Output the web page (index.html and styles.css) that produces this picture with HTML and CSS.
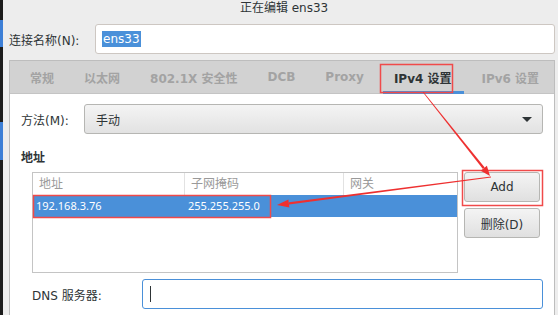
FILE: index.html
```html
<!DOCTYPE html>
<html lang="zh-CN">
<head>
<meta charset="utf-8">
<title>正在编辑 ens33</title>
<link rel="stylesheet" href="styles.css">
</head>
<body>
<div class="screen">
  <div class="strip"></div>
  <div class="window">
    <div class="title">正在编辑 ens33</div>
    <div class="name-row">
      <span class="name-label">连接名称(N):</span>
      <div class="entry"><span class="sel">ens33</span></div>
    </div>
    <div class="notebook">
      <div class="tabs">
        <span class="tab">常规</span>
        <span class="tab">以太网</span>
        <span class="tab">802.1X 安全性</span>
        <span class="tab">DCB</span>
        <span class="tab">Proxy</span>
        <span class="tab active">IPv4 设置</span>
        <span class="tab">IPv6 设置</span>
      </div>
      <div class="page">
        <div class="method-row">
          <span class="method-label">方法(M):</span>
          <div class="combo"><span>手动</span><span class="caret"></span></div>
        </div>
        <div class="heading">地址</div>
        <div class="addr-row">
          <div class="table">
            <div class="thead">
              <div class="th">地址</div>
              <div class="th">子网掩码</div>
              <div class="th">网关</div>
            </div>
            <div class="trow">
              <div class="td">192.168.3.76</div>
              <div class="td">255.255.255.0</div>
              <div class="td"></div>
            </div>
          </div>
          <div class="btns">
            <div class="btn">Add</div>
            <div class="btn">删除(D)</div>
          </div>
        </div>
        <div class="dns-row">
          <span class="dns-label">DNS 服务器:</span>
          <div class="entry focus"><span class="cursor"></span></div>
        </div>
      </div>
    </div>
  </div>
  <svg class="annot" width="558" height="315" viewBox="0 0 558 315">
    <g fill="none" stroke="#f04a4a" stroke-width="1.5">
      <rect x="380.5" y="64.5" width="72" height="28"/>
      <rect x="462.5" y="170.5" width="80" height="35"/>
      <rect x="33.5" y="195.5" width="237" height="22"/>
    </g>
    <g fill="#ee3030">
      <polygon points="422.8,92.2 423.3,91.8 484.7,167.5 482.9,169"/>
      <polygon points="480.7,170.7 486.9,165.7 490,176"/>
      <polygon points="491,176.6 491,177.4 289,204.6 289,202.2"/>
      <polygon points="288.4,199.5 289.4,207.6 277,205"/>
    </g>
  </svg>
</div>
</body>
</html>
```

FILE: styles.css
```css
* { box-sizing: border-box; }
html, body { margin: 0; padding: 0; }
body {
  width: 558px;
  height: 315px;
  overflow: hidden;
  font-family: "DejaVu Sans", "Noto Sans CJK SC", sans-serif;
  font-size: 12px;
  color: #2e3436;
  background: #ededed;
}
.screen {
  position: relative;
  display: flex;
  width: 558px;
  height: 315px;
}
.strip {
  width: 3px;
  flex: none;
  background: linear-gradient(to bottom, #1c1c1c 0 20px, #3d7fd6 20px 47px, #1c1c1c 47px 122px, #3d7fd6 122px 160px, #1c1c1c 160px);
}
.window {
  flex: 1;
  display: flex;
  flex-direction: column;
  padding: 0 6px 0 6px;
  background: #ededed;
}
.title {
  height: 16px;
  line-height: 16px;
  text-align: center;
  padding-left: 4px;
  color: #2e3436;
}
.name-row {
  display: flex;
  align-items: center;
  margin-top: 8px;
  height: 30px;
}
.name-label { width: 86px; flex: none; }
.entry {
  flex: 1;
  height: 30px;
  background: #fff;
  border: 1px solid #cdc7c2;
  border-radius: 3px;
  display: flex;
  align-items: center;
  padding-left: 6px;
}
.sel {
  background: #4a90d9;
  color: #fff;
  line-height: 16px;
  padding: 0 1px;
}
.notebook {
  margin-top: 6px;
  flex: 1;
  display: flex;
  flex-direction: column;
  border: 1px solid #bdbdbd;
  border-bottom: none;
}
.tabs {
  height: 33px;
  flex: none;
  background: #d2d2d2;
  display: flex;
  align-items: stretch;
  padding-left: 5px;
  border-bottom: 1px solid #c4c4c4;
}
.tab {
  position: relative;
  display: flex;
  align-items: center;
  padding: 0 15px;
  font-weight: bold;
  color: #a3a3a3;
  white-space: nowrap;
}
.tab.active { color: #2e3436; }
.tab.active::after {
  content: "";
  position: absolute;
  left: 4px;
  right: 3px;
  bottom: -1px;
  height: 3px;
  background: #4a90d9;
}
.page {
  flex: 1;
  background: #ffffff;
  padding: 10px 11px 0 11px;
  display: flex;
  flex-direction: column;
}
.method-row {
  display: flex;
  align-items: center;
  height: 30px;
}
.method-label { width: 63px; flex: none; }
.combo {
  flex: 1;
  height: 30px;
  display: flex;
  align-items: center;
  justify-content: space-between;
  padding: 0 10px 0 11px;
  border: 1px solid #b6b6b3;
  border-radius: 3px;
  background: linear-gradient(to bottom, #f4f4f4, #e2e2e2);
}
.caret {
  width: 0;
  height: 0;
  border-left: 5px solid transparent;
  border-right: 5px solid transparent;
  border-top: 5px solid #2e3436;
}
.heading {
  margin-top: 16px;
  line-height: 16px;
  font-weight: bold;
}
.addr-row {
  display: flex;
  gap: 6px;
  margin-top: 6px;
  padding-left: 11px;
}
.table {
  width: 426px;
  height: 101px;
  border: 1px solid #c4c4c4;
  background: #fff;
}
.thead, .trow {
  display: grid;
  grid-template-columns: 151px 159px 1fr;
  height: 22px;
}
.th {
  color: #9a9a9a;
  padding-left: 6px;
  line-height: 22px;
  border-left: 1px solid #e2e2e2;
}
.th:first-child { border-left: none; }
.trow { background: #4a90d9; color: #fff; }
.td {
  font-family: "Noto Sans", "Noto Sans CJK SC", sans-serif;
  font-size: 11px;
  line-height: 22px;
  padding-left: 3px;
}
.td:nth-child(2) { padding-left: 4px; }
.btns {
  display: flex;
  flex-direction: column;
  gap: 6px;
}
.btn {
  width: 76px;
  height: 30px;
  display: flex;
  align-items: center;
  justify-content: center;
  border: 1px solid #b6b6b3;
  border-radius: 3px;
  background: linear-gradient(to bottom, #f4f4f4, #e0e0e0);
  color: #2e3436;
}
.dns-row {
  display: flex;
  align-items: center;
  margin-top: 6px;
  padding-left: 11px;
  height: 30px;
}
.dns-label { width: 110px; flex: none; }
.entry.focus {
  border: 1px solid #4a90d9;
  padding-left: 7px;
}
.cursor {
  width: 1px;
  height: 16px;
  background: #2e3436;
}
.annot {
  position: absolute;
  left: 0;
  top: 0;
  pointer-events: none;
}
```
